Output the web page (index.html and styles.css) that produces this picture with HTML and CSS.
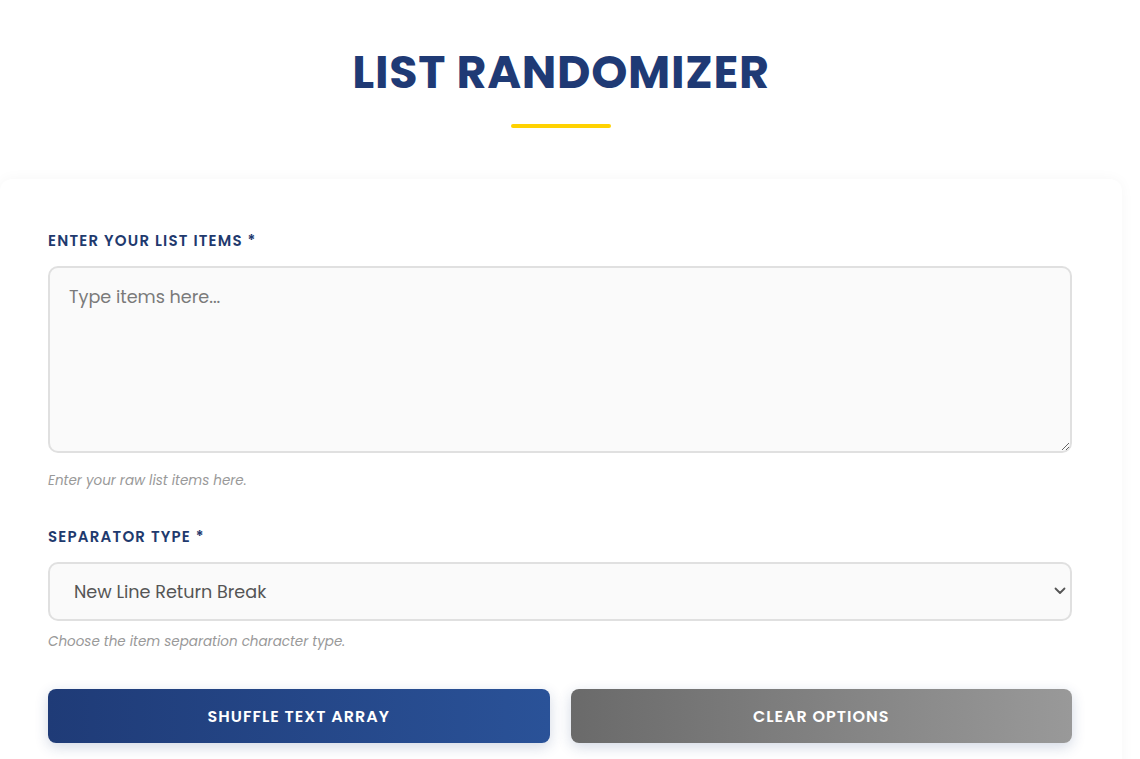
FILE: index.html
```html
<!DOCTYPE html>
<html lang="en">
<head>
    <meta charset="UTF-8">
    <meta name="viewport" content="width=device-width, initial-scale=1.0">
    <title>List Randomizer</title>
    <link rel="stylesheet" href="styles.css">
</head>
<body>
    <div class="page">
        <!-- Header -->
        <header class="header">
            <h1 class="title">LIST RANDOMIZER</h1>
            <div class="title-bar"></div>
        </header>

        <!-- Form card -->
        <div class="card">
            <div class="field">
                <label class="label" for="items">ENTER YOUR LIST ITEMS *</label>
                <textarea id="items" class="textarea" placeholder="Type items here..."></textarea>
                <p class="help help-area">Enter your raw list items here.</p>
            </div>

            <div class="field">
                <label class="label" for="separator">SEPARATOR TYPE *</label>
                <div class="select-wrap">
                    <select id="separator" class="select">
                        <option>New Line Return Break</option>
                        <option>Comma</option>
                        <option>Space</option>
                    </select>
                    <svg class="select-arrow" width="12" height="8" viewBox="0 0 12 8">
                        <path d="M1.5 1.5 L6 6 L10.5 1.5" fill="none" stroke="#555" stroke-width="1.8" stroke-linecap="round" stroke-linejoin="round"/>
                    </svg>
                </div>
                <p class="help">Choose the item separation character type.</p>
            </div>

            <div class="actions">
                <button class="btn btn-primary">SHUFFLE TEXT ARRAY</button>
                <button class="btn btn-secondary">CLEAR OPTIONS</button>
            </div>
        </div>
    </div>
</body>
</html>
```

FILE: styles.css
```css
/* List randomizer page */
body {
    margin: 0;
    background: #fff;
    font-family: "Poppins", "Open Sans", "Liberation Sans", sans-serif;
    color: #333;
}

.page {
    width: 1122px;
}

.header {
    text-align: center;
    padding-top: 42px;
}

.title {
    margin: 0;
    font-size: 46px;
    line-height: 60px;
    font-weight: 700;
    letter-spacing: 0.7px;
    color: #1f3a75;
}

.title-bar {
    width: 100px;
    height: 4px;
    margin: 22px auto 0;
    background: #ffd200;
    border-radius: 2px;
}

.card {
    margin-top: 51px;
    padding: 51px 50px 40px 48px;
    background: #fff;
    border-radius: 12px;
    box-shadow: 0 0 14px rgba(0, 0, 0, 0.04);
}

.field {
    margin-bottom: 35px;
}

.label {
    display: block;
    font-size: 15px;
    line-height: 21px;
    font-weight: 600;
    letter-spacing: 1.2px;
    color: #1f3a6e;
    margin-bottom: 15px;
}

.textarea {
    display: block;
    box-sizing: border-box;
    width: 100%;
    height: 187px;
    padding: 16px 19px;
    border: 2px solid #e0e0e0;
    border-radius: 10px;
    background: #fafafa;
    font-family: inherit;
    font-size: 17.6px;
    color: #333;
    resize: vertical;
}

.textarea::placeholder {
    color: #7a7a7a;
}

.select-wrap {
    position: relative;
}

.select {
    display: block;
    box-sizing: border-box;
    width: 100%;
    height: 59px;
    padding: 0 24px;
    border: 2px solid #e0e0e0;
    border-radius: 10px;
    background: #fafafa;
    font-family: inherit;
    font-size: 17.6px;
    color: #555;
    appearance: none;
}

.select-arrow {
    position: absolute;
    right: 6px;
    top: 25px;
}

.help {
    margin: 11px 0 0;
    font-size: 13.5px;
    line-height: 20px;
    font-style: italic;
    color: #999;
}

.help-area {
    margin-top: 18px;
}

.actions {
    display: grid;
    grid-template-columns: 1fr 1fr;
    gap: 21px;
    margin-top: 37px;
}

.btn {
    height: 54px;
    border: none;
    border-radius: 8px;
    font-family: inherit;
    font-size: 16px;
    font-weight: 600;
    letter-spacing: 1px;
    color: #fff;
    cursor: pointer;
    box-shadow: 0 4px 14px rgba(30, 60, 120, 0.2);
}

.btn-primary {
    background: linear-gradient(90deg, #1f3b77, #2a5298);
}

.btn-secondary {
    background: linear-gradient(90deg, #6a6a6a, #999);
}
```
